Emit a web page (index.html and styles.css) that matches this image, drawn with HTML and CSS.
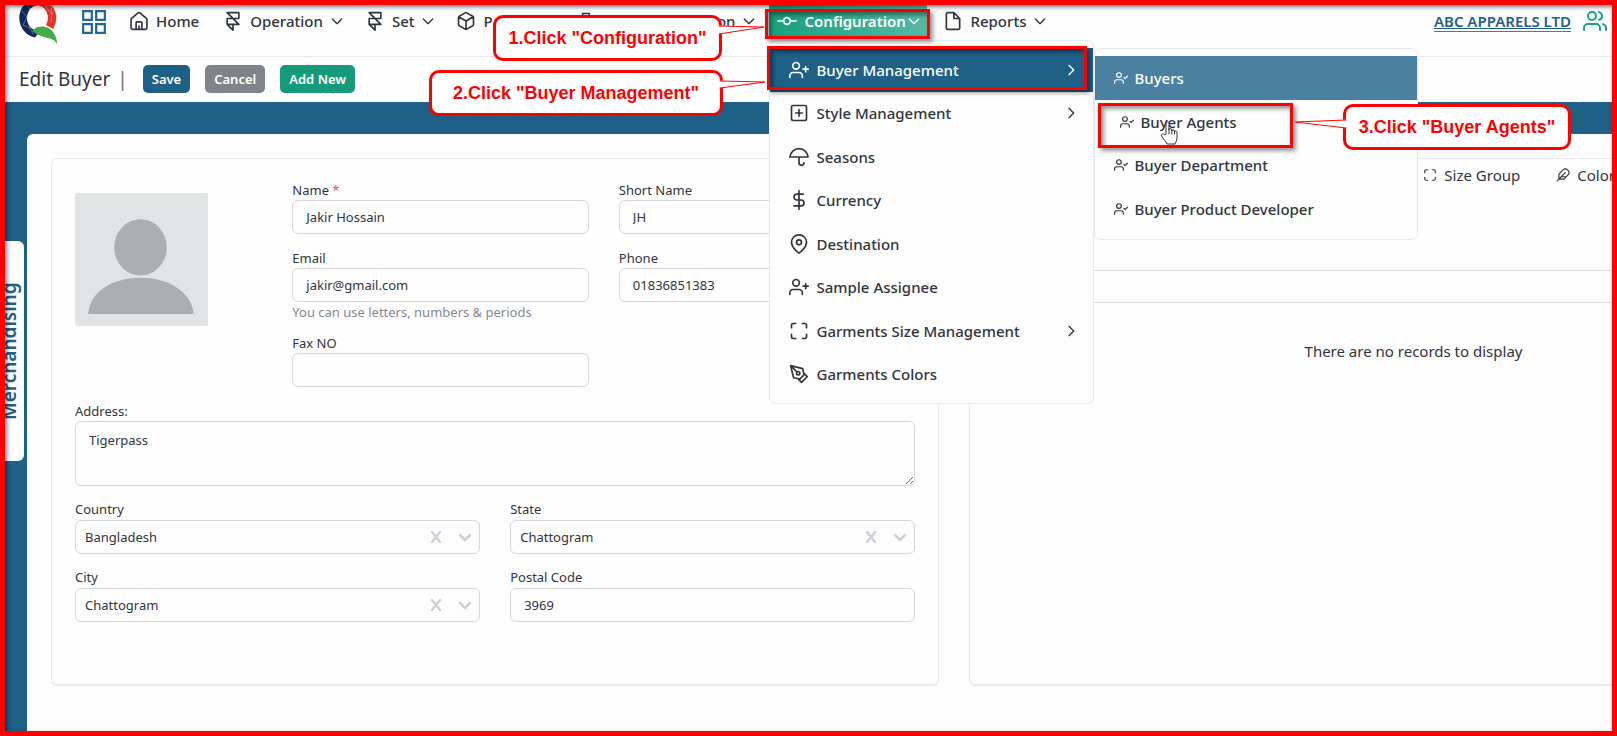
FILE: index.html
```html
<!DOCTYPE html>
<html lang="en">
<head>
<meta charset="utf-8">
<title>Edit Buyer</title>
<link rel="stylesheet" href="styles.css">
</head>
<body>
<svg class="sprite" aria-hidden="true">
  <symbol id="i-down" viewBox="0 0 24 24"><path d="M5 9l7 7 7-7"/></symbol>
  <symbol id="i-right" viewBox="0 0 24 24"><path d="M9 5l7 7-7 7"/></symbol>
  <symbol id="i-framer" viewBox="0 0 24 24"><path d="M5 16V9h14V2H5l14 14h-7m-7 0l7 7v-7m-7 0h7"/></symbol>
  <symbol id="i-user-plus" viewBox="0 0 24 24"><path d="M16 21v-2a4 4 0 0 0-4-4H5a4 4 0 0 0-4 4v2"/><circle cx="8.500" cy="7" r="4"/><path d="M20 8v6M23 11h-6"/></symbol>
  <symbol id="i-user-check" viewBox="0 0 24 24"><path d="M16 21v-2a4 4 0 0 0-4-4H5a4 4 0 0 0-4 4v2"/><circle cx="8.500" cy="7" r="4"/><path d="M17 11l2 2 4-4"/></symbol>
  <symbol id="i-size" viewBox="0 0 24 24"><path d="M8 3H5a2 2 0 0 0-2 2v3m18 0V5a2 2 0 0 0-2-2h-3m0 18h3a2 2 0 0 0 2-2v-3M3 16v3a2 2 0 0 0 2 2h3"/></symbol>
</svg>

<header class="navbar">
  <a class="logo" href="#" aria-label="Home page">
    <svg viewBox="0 0 40 48">
      <path d="M20 0A20 20 0 0 0 17 39.500L22 33A12 13 0 1 1 20 7z" fill="#12275e"/>
      <path d="M17 0A20 20 0 0 1 35 31L28 27A12 13 0 0 0 18 7z" fill="#e5342b"/>
      <path d="M14 33C20 26 31 28 35 34C38 38 39 42 39 46C35 38 26 42 14 33z" fill="#3fae49"/>
      <path d="M4 13l5 6-4 8 7 3 3 6M9 6l3 5-3 8 3 11M22 3l6 6 5-2 1 9M28 9l6 7-1 8" fill="none" stroke="#fff" stroke-opacity=".45" stroke-width=".7"/>
    </svg>
  </a>
  <button class="apps" type="button" aria-label="Modules">
    <svg viewBox="0 0 24 24"><path d="M2 2h8v8H2zM14 2h8v8h-8zM2 14h8v8H2zM14 14h8v8h-8z"/></svg>
  </button>
  <nav class="menu">
    <a class="link" href="#"><svg class="ico" viewBox="0 0 24 24"><path d="M4 22h16a1.500 1.500 0 0 0 1.500-1.500V10.500Q21.500 9.500 20.500 8.500L13.500 2.500Q12 1.500 10.500 2.500L3.500 8.500Q2.500 9.500 2.500 10.500v10A1.500 1.500 0 0 0 4 22zM8.500 22v-8a1 1 0 0 1 1-1h5a1 1 0 0 1 1 1v8M12 22v-4"/></svg>Home</a>
    <a class="link" href="#"><svg class="ico"><use href="#i-framer"/></svg>Operation<svg class="chev"><use href="#i-down"/></svg></a>
    <a class="link" href="#"><svg class="ico"><use href="#i-framer"/></svg>Set<svg class="chev"><use href="#i-down"/></svg></a>
    <a class="link link-wide" href="#"><svg class="ico" viewBox="0 0 24 24"><path d="M21 16V8a2 2 0 0 0-1-1.730l-7-4a2 2 0 0 0-2 0l-7 4A2 2 0 0 0 3 8v8a2 2 0 0 0 1 1.730l7 4a2 2 0 0 0 2 0l7-4A2 2 0 0 0 21 16zM3.270 6.960L12 12l8.730-5.040M12 22V12"/></svg>Pa</a>
    <a class="link link-end" href="#"><svg class="ico" viewBox="0 0 24 24"><path d="M8 3h8v5H8z"/></svg><span class="push">on</span><svg class="chev"><use href="#i-down"/></svg></a>
    <div class="drop">
      <a class="link active" href="#"><svg class="ico" viewBox="0 0 24 24"><circle cx="12" cy="12" r="4"/><path d="M1 12h7M16 12h7"/></svg>Configuration<svg class="chev"><use href="#i-down"/></svg></a>
      <ul class="panel">
        <li class="has-sub"><a class="item selected" href="#"><svg class="ico"><use href="#i-user-plus"/></svg>Buyer Management<svg class="chev"><use href="#i-right"/></svg></a>
          <ul class="panel sub">
            <li><a class="item current" href="#"><svg class="mini"><use href="#i-user-check"/></svg>Buyers</a></li>
            <li><a class="item hovered" href="#"><svg class="mini"><use href="#i-user-check"/></svg>Buyer Agents</a></li>
            <li><a class="item" href="#"><svg class="mini"><use href="#i-user-check"/></svg>Buyer Department</a></li>
            <li><a class="item" href="#"><svg class="mini"><use href="#i-user-check"/></svg>Buyer Product Developer</a></li>
          </ul>
        </li>
        <li><a class="item" href="#"><svg class="ico" viewBox="0 0 24 24"><rect x="3" y="3" width="18" height="18" rx="2"/><path d="M12 8v8M8 12h8"/></svg>Style Management<svg class="chev"><use href="#i-right"/></svg></a></li>
        <li><a class="item" href="#"><svg class="ico" viewBox="0 0 24 24"><path d="M23 12a11.050 11.050 0 0 0-22 0zm-5 7a3 3 0 0 1-6 0v-7"/></svg>Seasons</a></li>
        <li><a class="item" href="#"><svg class="ico" viewBox="0 0 24 24"><path d="M12 1v22M17 5H9.500a3.500 3.500 0 0 0 0 7h5a3.500 3.500 0 0 1 0 7H6"/></svg>Currency</a></li>
        <li><a class="item" href="#"><svg class="ico" viewBox="0 0 24 24"><path d="M21 10c0 7-9 13-9 13s-9-6-9-13a9 9 0 0 1 18 0z"/><circle cx="12" cy="10" r="3"/></svg>Destination</a></li>
        <li><a class="item" href="#"><svg class="ico"><use href="#i-user-plus"/></svg>Sample Assignee</a></li>
        <li><a class="item" href="#"><svg class="ico"><use href="#i-size"/></svg>Garments Size Management<svg class="chev"><use href="#i-right"/></svg></a></li>
        <li><a class="item" href="#"><svg class="ico" viewBox="0 0 24 24"><path d="M12 19l7-7 3 3-7 7-3-3zM18 13l-1.500-7.500L2 2l3.500 14.500L13 18l5-5zM2 2l7.586 7.586"/><circle cx="11" cy="11" r="2"/></svg>Garments Colors</a></li>
      </ul>
    </div>
    <a class="link" href="#"><svg class="ico" viewBox="0 0 24 24"><path d="M13 2H6a2 2 0 0 0-2 2v16a2 2 0 0 0 2 2h12a2 2 0 0 0 2-2V9zM13 2v7h7"/></svg>Reports<svg class="chev"><use href="#i-down"/></svg></a>
  </nav>
  <div class="account">
    <a class="company" href="#">ABC APPARELS LTD</a>
    <svg class="users" viewBox="0 0 24 24"><path d="M17 21v-2a4 4 0 0 0-4-4H5a4 4 0 0 0-4 4v2"/><circle cx="9" cy="7" r="4"/><path d="M23 21v-2a4 4 0 0 0-3-3.870M16 3.130a4 4 0 0 1 0 7.750"/></svg>
  </div>
</header>

<div class="toolbar">
  <h1>Edit Buyer <span class="bar">|</span></h1>
  <button class="btn btn-save" type="button">Save</button>
  <button class="btn btn-cancel" type="button">Cancel</button>
  <button class="btn btn-add" type="button">Add New</button>
</div>

<div class="stage">
  <aside class="side"><button class="side-tab" type="button">Merchandising</button></aside>
  <main class="content">
    <form class="card form">
      <div class="row profile">
        <svg class="avatar" viewBox="0 0 132 132" role="img" aria-label="Buyer photo"><rect width="132" height="132" rx="2" fill="#e1e4e5"/><ellipse cx="65" cy="54" rx="26" ry="28" fill="#a8b0b2"/><path d="M13 120C15 97 38 84 65 84s50 13 53 36z" fill="#a8b0b2"/></svg>
        <div class="stack">
          <div class="field"><label for="name">Name <span class="req">*</span></label><input id="name" value="Jakir Hossain"></div>
          <div class="field"><label for="email">Email</label><input id="email" value="jakir@gmail.com"><small>You can use letters, numbers &amp; periods</small></div>
          <div class="field"><label for="fax">Fax NO</label><input id="fax"></div>
        </div>
        <div class="stack">
          <div class="field"><label for="short">Short Name</label><input id="short" value="JH"></div>
          <div class="field"><label for="phone">Phone</label><input id="phone" value="01836851383"></div>
        </div>
      </div>
      <div class="field"><label for="address">Address:</label><textarea id="address">Tigerpass</textarea></div>
      <div class="row pair">
        <div class="field"><label for="country">Country</label><div class="select"><select id="country"><option>Bangladesh</option></select><button type="button" aria-label="Clear country"><svg viewBox="0 0 12 12"><path d="M2 1l8 10M10 1L2 11"/></svg></button><svg class="caret" viewBox="0 0 14 12"><path d="M2 4l5 5 5-5"/></svg></div></div>
        <div class="field"><label for="state">State</label><div class="select"><select id="state"><option>Chattogram</option></select><button type="button" aria-label="Clear state"><svg viewBox="0 0 12 12"><path d="M2 1l8 10M10 1L2 11"/></svg></button><svg class="caret" viewBox="0 0 14 12"><path d="M2 4l5 5 5-5"/></svg></div></div>
        <div class="field"><label for="city">City</label><div class="select"><select id="city"><option>Chattogram</option></select><button type="button" aria-label="Clear city"><svg viewBox="0 0 12 12"><path d="M2 1l8 10M10 1L2 11"/></svg></button><svg class="caret" viewBox="0 0 14 12"><path d="M2 4l5 5 5-5"/></svg></div></div>
        <div class="field"><label for="postal">Postal Code</label><input id="postal" value="3969"></div>
      </div>
    </form>
    <section class="card records">
      <div class="tabs">
        <a class="tab" href="#"><svg class="mini"><use href="#i-size"/></svg>Size Group</a>
        <a class="tab" href="#"><svg class="mini" viewBox="0 0 24 24"><path d="M20.240 12.240a6 6 0 0 0-8.490-8.490L5 10.500V19h8.500zM16 8L2 22M17.500 15H9"/></svg>Color</a>
      </div>
      <div class="table-head"></div>
      <p class="empty">There are no records to display</p>
    </section>
  </main>
</div>

<div class="notes">
  <div class="mark mark-1"></div>
  <div class="mark mark-2"></div>
  <div class="mark mark-3"></div>
  <div class="callout callout-1">1.Click "Configuration"<svg class="tail" viewBox="0 0 46 12"><path class="fill" d="M-2 1L45 2 -2 9z"/><path d="M0 1L45 2 0 9"/></svg></div>
  <div class="callout callout-2">2.Click "Buyer Management"<svg class="tail" viewBox="0 0 46 12"><path class="fill" d="M-2 1L45 2 -2 8z"/><path d="M0 1L45 2 0 8"/></svg></div>
  <div class="callout callout-3">3.Click "Buyer Agents"<svg class="tail tail-left" viewBox="0 0 52 12"><path class="fill" d="M54 1L1 3 54 9z"/><path d="M52 1L1 3 52 9"/></svg></div>
  <svg class="hand" viewBox="0 0 18 25"><path d="M6 14V3.500a1.500 1.500 0 0 1 3 0V10a1.400 1.400 0 0 1 2.800 0v1a1.400 1.400 0 0 1 2.700 0v1a1.300 1.300 0 0 1 2.500 0v6c0 3-2 5-2 6H7c-1-3-4-5-5.500-8-.8-2 1-3 2.500-1.500z"/><path d="M9 9v5M11.800 10v4M14.500 11v3"/></svg>
  <div class="frame"></div>
</div>
</body>
</html>
```
FILE: styles.css
```css
* { box-sizing: border-box; }
html, body { height: 100%; }
body {
  margin: 0;
  display: flex;
  flex-direction: column;
  overflow: hidden;
  background: #fdfdfd;
  color: #30353c;
  font-family: "Noto Sans", "Open Sans", sans-serif;
  font-size: 13px;
  line-height: 20px;
}
a { color: inherit; text-decoration: none; }
button, input, textarea, select { font: inherit; color: inherit; }
ul { margin: 0; padding: 0; list-style: none; }
svg { fill: none; stroke: currentColor; stroke-width: 2; stroke-linecap: round; stroke-linejoin: round; flex: none; }
.sprite { position: absolute; width: 0; height: 0; }
.ico { width: 20px; height: 20px; }
.chev { width: 16px; height: 16px; }
.mini { width: 14px; height: 14px; }

/* Top bar */
.navbar {
  display: flex;
  align-items: flex-start;
  height: 57px;
  padding: 5px 10px 0 18px;
  border-bottom: 1px solid #e9e8ee;
  background: #fdfdfd;
}
.logo { margin-top: -7px; }
.logo svg { display: block; width: 40px; height: 48px; stroke: none; }
.apps { margin: 4px 0 0 23px; padding: 0; border: 0; background: none; color: #1f6590; }
.apps svg { display: block; width: 26px; height: 26px; stroke-linejoin: miter; }
.menu { display: flex; margin-left: 22px; font-size: 15px; font-weight: 500; }
.link { display: flex; align-items: center; height: 32px; }
.link .ico { margin-right: 7px; }
.link .chev { margin-left: 6px; }
.link + .link { margin-left: 24px; }
.link + .link ~ .link { margin-left: 20px; }
.link.link-wide { width: 100px; }
.link.link-end { width: 181px; }
.push { margin-left: auto; }
.drop { position: relative; margin-left: 12px; }
.active { width: 158px; padding: 0 6px 0 8px; background: linear-gradient(90deg, #18a07c, #55b8a4); color: #fff; font-weight: 600; }
.link.active .chev { margin-left: auto; }
.link + .link ~ .drop + .link { margin-left: 16px; }
.account { display: flex; align-items: center; gap: 12px; height: 32px; margin-left: auto; color: #1aa37c; }
.company { border-bottom: 1px solid #66727c; color: #1f6087; font-size: 15px; font-weight: 600; line-height: 20px; text-decoration: underline; }
.users { width: 24px; height: 24px; }

/* Drop-down menus */
.panel {
  position: absolute;
  z-index: 2;
  top: 35px;
  left: 0;
  display: grid;
  grid-auto-rows: 1fr;
  width: 325px;
  height: 364px;
  padding: 7px 0;
  border: 1px solid #e9e8ee;
  border-radius: 6px;
  background: #fdfdfd;
  font-weight: 500;
}
.has-sub { position: relative; }
.sub { top: 0; left: 324px; width: 324px; height: 192px; padding-bottom: 8px; }
.item { display: flex; align-items: center; gap: 7px; height: 100%; padding: 0 14px 0 19px; }
.item .chev { margin-left: auto; }
.sub .item { gap: 6px; }
.selected { background: #1f6087; color: #fff; }
.current { background: #4a80a0; color: #fff; }
.sub .hovered { padding-left: 25px; }

/* Page title and actions */
.toolbar { display: flex; align-items: center; height: 45px; padding: 0 0 2px 19px; }
h1 { margin: 0 15px 0 0; font-size: 19px; font-weight: 400; line-height: 24px; }
.bar { margin-left: 2px; color: #6a6e75; }
.btn { height: 28px; margin-right: 15px; padding: 0 9px; border: 0; border-radius: 5px; color: #fff; font-weight: 600; }
.btn-save { background: #1f6087; }
.btn-cancel { background: #80838a; }
.btn-add { background: #159b7c; }

/* Working area */
.stage { display: flex; flex: 1; background: #1f6087; }
.side { width: 27px; padding-top: 139px; }
.side-tab {
  width: 24px;
  height: 220px;
  padding: 0 0 0 6px;
  border: 0;
  border-radius: 6px 0 0 6px;
  background: #fdfdfd;
  color: #1f6087;
  font-size: 19px;
  font-weight: 600;
  line-height: 16px;
  writing-mode: vertical-rl;
  transform: rotate(180deg);
}
.content {
  display: grid;
  grid-template-columns: repeat(2, calc(55vw - 1px));
  gap: 30px;
  align-items: stretch;
  flex: 1;
  min-width: 0;
  overflow: hidden;
  margin-top: 32px;
  padding: 24px 0 50px 24px;
  border-top-left-radius: 6px;
  background: #fdfdfd;
}
.card { border: 1px solid #e9e8ee; border-bottom-width: 2px; border-radius: 6px; }
.form { display: flex; flex-direction: column; gap: 14px; padding: 22px 23px; }
.row { display: grid; column-gap: 30px; }
.profile { grid-template-columns: 187fr 296fr 296fr; padding-bottom: 1px; }
.pair { grid-template-columns: 1fr 1fr; row-gap: 14px; }
.avatar { width: 133px; height: 133px; margin-top: 12px; stroke: none; }
.stack { display: flex; flex-direction: column; gap: 15px; }
.field { display: flex; flex-direction: column; }
.field label { height: 19px; line-height: 18px; }
.pair .field label { height: 20px; }
.req { color: #e3555a; }
small { height: 17px; color: #85888e; font-size: 13px; line-height: 20px; }
input, textarea, .select { width: 100%; height: 34px; border: 1px solid #d5d5da; border-radius: 6px; background: #fdfdfd; }
input, textarea { padding: 0 13px; }
textarea { display: block; height: 65px; padding: 8px 13px; resize: both; }
.select { display: flex; align-items: center; padding-right: 7px; color: #cfd0d7; }
select { flex: 1; height: 30px; padding: 0 9px; border: 0; background: none; color: #30353c; appearance: none; }
.select button { margin-right: 16px; padding: 0; border: 0; background: none; color: inherit; }
.select button svg { display: block; width: 12px; height: 12px; }
.select svg { stroke-width: 2.5; }
.caret { width: 14px; height: 12px; }

.records { display: flex; flex-direction: column; padding-top: 6px; }
.tabs { display: flex; gap: 36px; padding-left: 453px; font-size: 15px; }
.tab { display: flex; align-items: center; gap: 7px; }
.table-head { height: 33px; margin-top: 85px; border: solid #dddde2; border-width: 1px 0; }
.empty { margin: 38px 0 0; font-size: 15px; text-align: center; }

/* Tutorial annotations laid over the page */
.notes { position: fixed; z-index: 5; inset: 0; pointer-events: none; }
.frame { position: absolute; inset: 0; border: 5px solid #f00; box-shadow: inset 2px 2px 4px rgba(0, 0, 0, .5); }
.mark { position: absolute; border: 3px solid #f00; box-shadow: 3px 3px 4px rgba(0, 0, 0, .4), inset 3px 3px 4px rgba(0, 0, 0, .4); }
.mark-1 { left: 765px; top: 9px; width: 165px; height: 30px; }
.mark-2 { left: 767px; top: 46px; width: 320px; height: 44px; }
.mark-3 { left: 1098px; top: 103px; width: 195px; height: 45px; }
.callout {
  position: absolute;
  display: flex;
  align-items: center;
  justify-content: center;
  height: 46px;
  border: 3px solid #f00;
  border-radius: 10px;
  background: #fff;
  color: #f00;
  font: bold 18px "Liberation Sans", Arial, sans-serif;
}
.callout-1 { left: 493px; top: 15px; width: 229px; }
.callout-2 { left: 429px; top: 70px; width: 294px; }
.callout-3 { left: 1343px; top: 104px; width: 228px; }
.tail { position: absolute; top: 7px; left: 100%; width: 46px; height: 12px; overflow: visible; stroke-width: 1; }
.tail .fill { fill: #fff; stroke: #fff; }
.tail-left { top: 12px; right: 100%; left: auto; width: 52px; }
.hand { position: absolute; left: 1160px; top: 120px; width: 18px; height: 25px; stroke: #30353c; stroke-width: 1; fill: #fff; }
```
